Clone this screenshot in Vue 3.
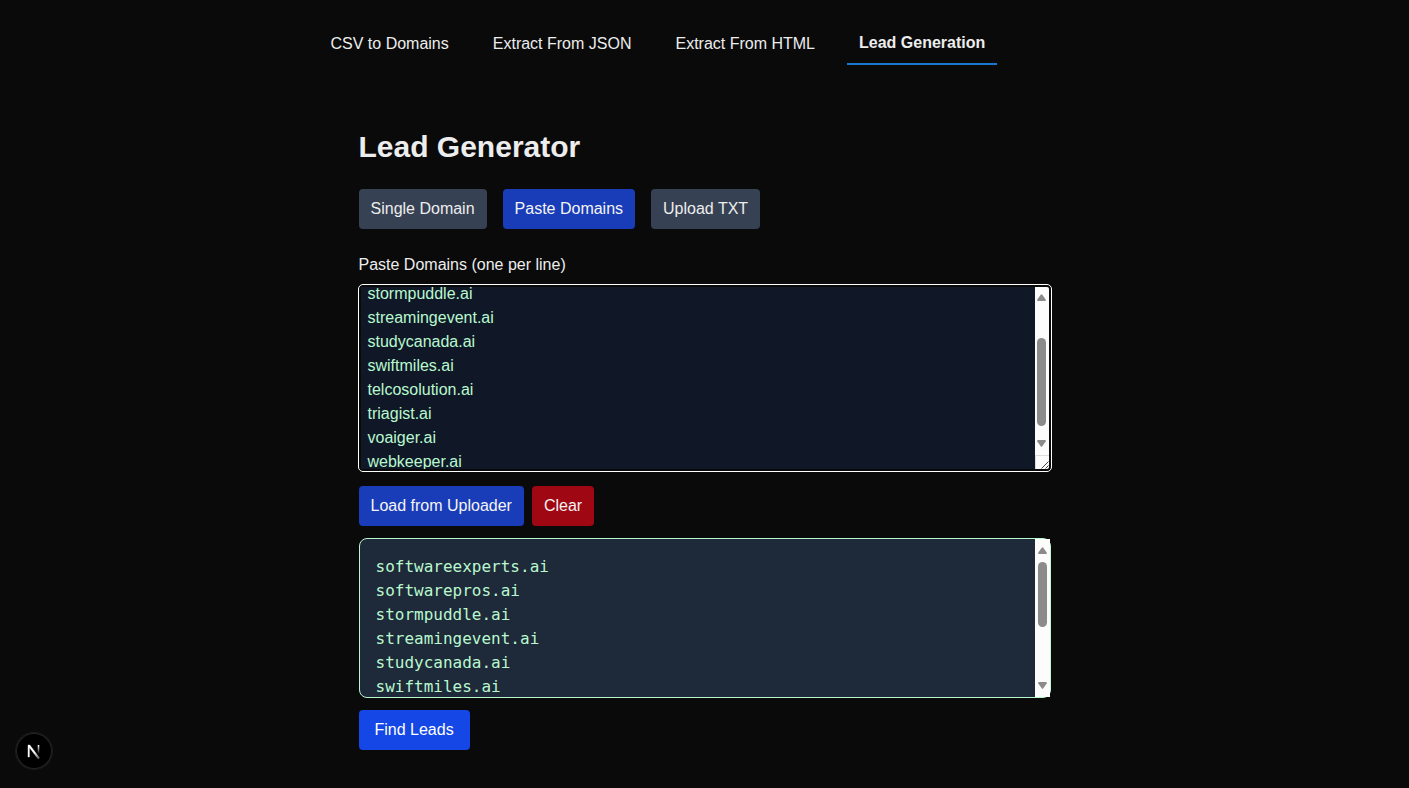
<script setup>
import { onMounted, ref } from 'vue'

const tabs = ['CSV to Domains', 'Extract From JSON', 'Extract From HTML', 'Lead Generation']
const activeTab = ref('Lead Generation')

const modes = ['Single Domain', 'Paste Domains', 'Upload TXT']
const mode = ref('Paste Domains')

const domains = ref([
  'softwareexperts.ai',
  'softwarepros.ai',
  'stormpuddle.ai',
  'streamingevent.ai',
  'studycanada.ai',
  'swiftmiles.ai',
  'telcosolution.ai',
  'triagist.ai',
  'voaiger.ai',
  'webkeeper.ai'
].join('\n'))

const box = ref(null)
onMounted(() => {
  box.value.scrollTop = 59
})
</script>

<template>
  <div class="page">
    <nav class="tabs">
      <a
        v-for="tab in tabs"
        :key="tab"
        href="#"
        class="tab"
        :class="{ active: tab === activeTab }"
        @click.prevent="activeTab = tab"
      >{{ tab }}</a>
    </nav>

    <main class="content">
      <h1>Lead Generator</h1>

      <div class="modes">
        <button
          v-for="m in modes"
          :key="m"
          type="button"
          class="btn"
          :class="{ selected: m === mode }"
          @click="mode = m"
        >{{ m }}</button>
      </div>

      <label for="domains">Paste Domains (one per line)</label>
      <div class="editor">
        <textarea id="domains" ref="box" v-model="domains" spellcheck="false"></textarea>
        <div class="bar editor-bar">
          <svg class="arrow" viewBox="0 0 9 7"><path d="M3.7 0.7Q4.5-0.3 5.3 0.7L8.7 5.6Q9.2 7 8 7H1Q-0.2 7 0.3 5.6Z" /></svg>
          <div class="track"><div class="thumb editor-thumb"></div></div>
          <svg class="arrow down" viewBox="0 0 9 7"><path d="M3.7 0.7Q4.5-0.3 5.3 0.7L8.7 5.6Q9.2 7 8 7H1Q-0.2 7 0.3 5.6Z" /></svg>
          <svg class="grip" viewBox="0 0 14 14"><path d="M0 0.5H14M0.5 0V14" stroke="#dcdcdc" /><path d="M6.5 13.5L13.5 6.5M10.5 13.5L13.5 10.5" stroke="#444" /></svg>
        </div>
      </div>

      <div class="actions">
        <button type="button" class="btn selected">Load from Uploader</button>
        <button type="button" class="btn danger" @click="domains = ''">Clear</button>
      </div>

      <div class="preview">
        <pre>{{ domains }}</pre>
        <div class="bar">
          <svg class="arrow" viewBox="0 0 9 7"><path d="M3.7 0.7Q4.5-0.3 5.3 0.7L8.7 5.6Q9.2 7 8 7H1Q-0.2 7 0.3 5.6Z" /></svg>
          <div class="track"><div class="thumb preview-thumb"></div></div>
          <svg class="arrow down" viewBox="0 0 9 7"><path d="M3.7 0.7Q4.5-0.3 5.3 0.7L8.7 5.6Q9.2 7 8 7H1Q-0.2 7 0.3 5.6Z" /></svg>
        </div>
      </div>

      <button type="button" class="btn find">Find Leads</button>
    </main>

    <button type="button" class="badge" aria-label="Open developer tools">
      <svg viewBox="0 0 36 36" fill="none">
        <defs>
          <linearGradient id="diag" x1="19" y1="19" x2="24" y2="26" gradientUnits="userSpaceOnUse">
            <stop stop-color="#fff" />
            <stop offset="1" stop-color="#fff" stop-opacity="0.25" />
          </linearGradient>
          <linearGradient id="stem" x1="0" y1="12" x2="0" y2="21" gradientUnits="userSpaceOnUse">
            <stop stop-color="#fff" />
            <stop offset="1" stop-color="#fff" stop-opacity="0" />
          </linearGradient>
        </defs>
        <path d="M12 12H13.8L23.6 25L22.2 26L13.4 14.5V24H12Z" fill="url(#diag)" stroke="url(#diag)" stroke-width="0.4" />
        <path d="M22.5 12V20.5" stroke="url(#stem)" stroke-width="1.6" />
      </svg>
    </button>
  </div>
</template>

<style>
body {
  margin: 0;
  background: #0a0a0a;
}
</style>

<style scoped>
.page {
  min-height: 100vh;
  box-sizing: border-box;
  padding-top: 21px;
  color: #ededed;
  font: 16px/24px "Liberation Sans", Arial, sans-serif;
}
.page * {
  box-sizing: border-box;
}
.tabs {
  display: flex;
  align-items: center;
  gap: 20px;
  max-width: 772px;
  margin: 0 auto;
}
.tab {
  padding: 10px 12px 8px;
  color: inherit;
  text-decoration: none;
}
.active {
  font-weight: 700;
  border-bottom: 2px solid #1976d2;
}
.content {
  max-width: 740px;
  margin: 0 auto;
  padding: 64px 24px 24px;
}
h1 {
  margin: 0 0 24px;
  font-size: 30px;
  line-height: 36px;
}
.modes {
  display: flex;
  gap: 16px;
  margin-bottom: 24px;
}
.btn {
  padding: 8px 12px;
  border: 0;
  border-radius: 4px;
  background: #364153;
  color: #ededed;
  font: inherit;
}
.selected {
  background: #193cb8;
  color: #f4f4f4;
}
.danger {
  background: #9f0712;
  color: #f4f4f4;
}
.find {
  padding: 8px 16px;
  background: #1447e6;
  color: #fff;
}
label {
  display: block;
  margin-bottom: 8px;
}
.editor {
  display: flex;
  height: 186px;
  padding: 2px;
  border-radius: 4px;
  outline: 1px solid #fff;
}
textarea {
  flex: 1;
  min-width: 0;
  padding: 6px 7px;
  border: 0;
  outline: 0;
  resize: none;
  background: #101828;
  color: #b9f8cf;
  font: inherit;
  scrollbar-width: none;
}
.actions {
  display: flex;
  gap: 8px;
  margin: 15px 0 12px;
}
.preview {
  display: flex;
  height: 160px;
  margin-bottom: 12px;
  border: 1px solid #b9f8cf;
  border-radius: 8px;
  background: #1e2939;
}
pre {
  flex: 1;
  margin: 0;
  padding: 16px;
  overflow: auto;
  scrollbar-width: none;
  color: #b9f8cf;
  font: 16px/24px "DejaVu Sans Mono", monospace;
}
.bar {
  display: flex;
  flex: none;
  flex-direction: column;
  align-items: center;
  width: 15px;
  background: #fcfcfc;
}
.editor-bar {
  width: 14px;
  border-radius: 0 2px 2px 0;
}
.arrow {
  width: 9px;
  height: 7px;
  margin: 8px 0 4px;
  fill: #8b8b8b;
}
.editor-bar .arrow:first-child {
  margin-top: 7px;
}
.arrow.down {
  margin: 4px 0 8px;
  transform: rotate(180deg);
}
.track {
  flex: 1;
}
.thumb {
  width: 9px;
  border-radius: 5px;
  background: #8b8b8b;
}
.editor-thumb {
  height: 88px;
  margin-top: 33px;
}
.preview-thumb {
  height: 65px;
  margin-top: 4px;
}
.grip {
  width: 100%;
  height: 14px;
}
.badge {
  position: fixed;
  left: 16px;
  bottom: 19px;
  width: 36px;
  height: 36px;
  padding: 0;
  border: 0;
  border-radius: 50%;
  background: #000;
  box-shadow: 0 0 0 1px #1c1c1c, inset 0 0 0 1px #242424;
}
.badge svg {
  display: block;
}
</style>
